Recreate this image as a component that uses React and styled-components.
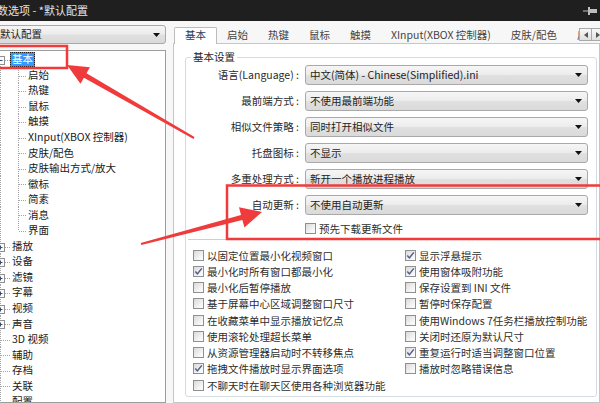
import React from "react";
import styled, { createGlobalStyle, css } from "styled-components";

const FONT = `"Noto Sans CJK SC", "Noto Sans", "Liberation Sans", sans-serif`;

const GlobalStyle = createGlobalStyle`
  html, body { margin: 0; padding: 0; background: #f7f7f7; }
  body { width: 600px; height: 403px; overflow: hidden; font-family: ${FONT}; }
  *, *::before, *::after { box-sizing: border-box; }
`;

const Window = styled.div`
  position: relative;
  width: 600px;
  height: 403px;
  overflow: hidden;
  background: #f7f7f7;
  display: flex;
  flex-direction: column;
  font-family: ${FONT};
  font-size: 10.5px;
  color: #222;
`;

const TitleBar = styled.div`
  flex: none;
  height: 21px;
  background: #1f1f1f;
  display: flex;
  align-items: center;
  justify-content: space-between;
  padding-right: 2px;
`;

const Title = styled.span`
  margin-left: -14px;
  color: #e4e4e4;
  font-size: 11px;
  line-height: 21px;
  white-space: nowrap;
`;

const Body = styled.div`
  flex: 1;
  min-height: 0;
  display: flex;
  gap: 7px;
  padding-top: 4px;
`;

const LeftCol = styled.div`
  flex: none;
  width: 176px;
  margin-left: -10px;
  display: flex;
  flex-direction: column;
  gap: 6px;
`;

const Combo = styled.div`
  flex: none;
  height: ${(p) => p.$h || 20}px;
  display: flex;
  align-items: center;
  justify-content: space-between;
  padding: 0 5px 0 ${(p) => p.$pl || 4}px;
  border: 1px solid #a9a9a9;
  border-radius: 3px;
  background: linear-gradient(#f6f6f6, #ececec 48%, #e0e0e0 52%, #dadada);
  color: #1e1e1e;
  white-space: nowrap;
  line-height: 1;
`;

const Tree = styled.div`
  flex: 1;
  min-height: 0;
  border: 1px solid #9d9d9d;
  background: #fff;
  padding-top: 1px;
  overflow: hidden;
`;

const TreeRow = styled.div`
  height: 15.55px;
  display: flex;
  align-items: center;
  white-space: nowrap;
`;

const NodeLabel = styled.span`
  padding: 0 2px;
  line-height: 14px;
  height: 15px;
  color: #1a1a1a;
  ${(p) =>
    p.$selected &&
    css`
      background: #3399ff;
      color: #fff;
      outline: 1px dotted #202020;
      outline-offset: -1px;
    `}
`;

const RightCol = styled.div`
  flex: none;
  width: 427px;
  position: relative;
  display: flex;
  flex-direction: column;
`;

const TabStrip = styled.div`
  flex: none;
  height: 18px;
  display: flex;
  align-items: flex-end;
  padding-left: 1px;
  white-space: nowrap;
`;

const Tab = styled.div`
  flex: none;
  padding: 0 10px 2px;
  height: 15px;
  line-height: 13px;
  color: #444;
  ${(p) =>
    p.$active &&
    css`
      position: relative;
      z-index: 1;
      height: 17px;
      margin-bottom: -1px;
      padding-bottom: 3px;
      border: 1px solid #bcbcbc;
      border-bottom: none;
      border-radius: 2px 2px 0 0;
      background: #fff;
      color: #1f3a5e;
    `}
`;

const ScrollButtons = styled.div`
  position: absolute;
  left: 407px;
  top: 3px;
  display: flex;
  z-index: 2;
`;

const ScrollBtn = styled.div`
  width: 13px;
  height: 13px;
  border: 1px solid #a9a9a9;
  margin-left: -1px;
  background: linear-gradient(#f8f8f8, #dfdfdf);
  display: flex;
  align-items: center;
  justify-content: center;
`;

const TabPage = styled.div`
  flex: 1;
  min-height: 0;
  border: 1px solid #c6c6c6;
  background: #fff;
  padding: 6px 0 0 11px;
`;

const GroupBox = styled.fieldset`
  margin: 0;
  width: 412px;
  min-width: 0;
  padding: 1px 8px 3px 8px;
  border: 1px solid #d3dce3;
  border-radius: 3px;
`;

const Legend = styled.legend`
  padding: 0 2px;
  margin-left: -3px;
  line-height: 14px;
  color: #1e1e1e;
`;

const FormGrid = styled.div`
  display: grid;
  grid-template-columns: 105px 283px;
  grid-template-rows: repeat(6, 20px) 14px;
  column-gap: 6px;
  row-gap: 6px;
`;

const FieldLabel = styled.div`
  text-align: right;
  line-height: 20px;
  white-space: nowrap;
  color: #2a2a2a;
`;

const Separator = styled.div`
  height: 1px;
  margin: 4px -6px 0;
  background: #cfcfcf;
`;

const CheckGrid = styled.div`
  display: grid;
  grid-template-columns: 212px 1fr;
  grid-auto-rows: 16.25px;
  margin: 7px 0 0 -1px;
`;

const CheckItem = styled.label`
  display: flex;
  align-items: center;
  gap: 3px;
  white-space: nowrap;
  color: #2e2e2e;
  grid-column: ${(p) => p.$col || "auto"};
`;

const Box = styled.span`
  flex: none;
  width: 11px;
  height: 11px;
  border: 1px solid #8e8f8f;
  background: linear-gradient(135deg, #d9d9d9, #f6f6f6 70%, #fdfdfd);
  display: flex;
  align-items: center;
  justify-content: center;
`;

const Overlay = styled.svg`
  position: absolute;
  left: 0;
  top: 0;
  width: 600px;
  height: 403px;
  pointer-events: none;
  z-index: 10;
`;

function DownArrow() {
  return (
    <svg width="7" height="4" viewBox="0 0 7 4">
      <path d="M0 0H7L3.5 4Z" fill="#111" />
    </svg>
  );
}

function Check({ checked }) {
  return (
    <Box>
      {checked && (
        <svg width="9" height="9" viewBox="0 0 9 9">
          <path d="M1.3 4.6 L3.4 6.9 L7.8 1.4" fill="none" stroke="#4d5f8c" strokeWidth="1.5" />
        </svg>
      )}
    </Box>
  );
}

const ROW_H = 15.55;

function Connector({ level, box, first, last }) {
  const cy = 8;
  const dot = { stroke: "#a3a3a3", strokeWidth: 1, strokeDasharray: "1 1", fill: "none" };
  if (level === 0) {
    return (
      <svg width="19" height={ROW_H} viewBox={`0 0 19 ${ROW_H}`} style={{ flex: "none" }}>
        <line x1="9.5" y1={first ? cy : 0} x2="9.5" y2={last ? cy : ROW_H} {...dot} />
        <line x1={box ? 14 : 10} y1={cy + 0.5} x2="19" y2={cy + 0.5} {...dot} />
        {box && (
          <g>
            <rect x="5.5" y={cy - 3.5} width="8" height="8" fill="#fafafa" stroke="#8f8f8f" />
            <line x1="7.5" y1={cy + 0.5} x2="11.5" y2={cy + 0.5} stroke="#3b4d6b" />
            {box === "plus" && <line x1="9.5" y1={cy - 1.5} x2="9.5" y2={cy + 2.5} stroke="#3b4d6b" />}
          </g>
        )}
      </svg>
    );
  }
  return (
    <svg width="35" height={ROW_H} viewBox={`0 0 35 ${ROW_H}`} style={{ flex: "none" }}>
      <line x1="9.5" y1="0" x2="9.5" y2={ROW_H} {...dot} />
      <line x1="27.5" y1="0" x2="27.5" y2={last ? cy : ROW_H} {...dot} />
      <line x1="28" y1={cy + 0.5} x2="35" y2={cy + 0.5} {...dot} />
    </svg>
  );
}

const tree = [
  { label: "基本", level: 0, box: "minus", first: true, selected: true },
  { label: "启始", level: 1 },
  { label: "热键", level: 1 },
  { label: "鼠标", level: 1 },
  { label: "触摸", level: 1 },
  { label: "XInput(XBOX 控制器)", level: 1 },
  { label: "皮肤/配色", level: 1 },
  { label: "皮肤输出方式/放大", level: 1 },
  { label: "徽标", level: 1 },
  { label: "简素", level: 1 },
  { label: "消息", level: 1 },
  { label: "界面", level: 1, last: true },
  { label: "播放", level: 0, box: "plus" },
  { label: "设备", level: 0, box: "plus" },
  { label: "滤镜", level: 0, box: "plus" },
  { label: "字幕", level: 0, box: "plus" },
  { label: "视频", level: 0, box: "plus" },
  { label: "声音", level: 0, box: "plus" },
  { label: "3D 视频", level: 0 },
  { label: "辅助", level: 0 },
  { label: "存档", level: 0 },
  { label: "关联", level: 0 },
  { label: "配置", level: 0 },
];

const tabs = ["基本", "启始", "热键", "鼠标", "触摸", "XInput(XBOX 控制器)", "皮肤/配色", "皮肤输出方式/放大"];

const fields = [
  ["语言(Language) :", "中文(简体) - Chinese(Simplified).ini"],
  ["最前端方式 :", "不使用最前端功能"],
  ["相似文件策略 :", "同时打开相似文件"],
  ["托盘图标 :", "不显示"],
  ["多重处理方式 :", "新开一个播放进程播放"],
  ["自动更新 :", "不使用自动更新"],
];

const checks = [
  ["以固定位置最小化视频窗口", false],
  ["显示浮悬提示", true],
  ["最小化时所有窗口都最小化", true],
  ["使用窗体吸附功能", true],
  ["最小化后暂停播放", false],
  ["保存设置到 INI 文件", false],
  ["基于屏幕中心区域调整窗口尺寸", false],
  ["暂停时保存配置", false],
  ["在收藏菜单中显示播放记忆点", false],
  ["使用Windows 7任务栏播放控制功能", false],
  ["使用滚轮处理超长菜单", false],
  ["关闭时还原为默认尺寸", false],
  ["从资源管理器启动时不转移焦点", false],
  ["重复运行时适当调整窗口位置", true],
  ["拖拽文件播放时显示界面选项", true],
  ["播放时忽略错误信息", false],
  ["不聊天时在聊天区使用各种浏览器功能", false],
];

function arrowPoints(x1, y1, x2, y2, headLen, headW, w0, w1) {
  const L = Math.hypot(x2 - x1, y2 - y1);
  const dx = (x2 - x1) / L;
  const dy = (y2 - y1) / L;
  const nx = -dy;
  const ny = dx;
  const bx = x2 - dx * headLen;
  const by = y2 - dy * headLen;
  const pts = [
    [x1 + nx * w0, y1 + ny * w0],
    [bx + nx * w1, by + ny * w1],
    [bx + nx * headW, by + ny * headW],
    [x2, y2],
    [bx - nx * headW, by - ny * headW],
    [bx - nx * w1, by - ny * w1],
    [x1 - nx * w0, y1 - ny * w0],
  ];
  return pts.map((p) => p.map((v) => v.toFixed(1)).join(",")).join(" ");
}

function PinIcon() {
  return (
    <svg width="15" height="10" viewBox="0 0 15 10">
      <rect x="0" y="4.5" width="5" height="1" fill="#bdbdbd" />
      <rect x="5" y="1" width="2" height="8" fill="#bdbdbd" />
      <rect x="7" y="3" width="7" height="4" fill="#bdbdbd" />
    </svg>
  );
}

function SmallTri({ dir }) {
  return (
    <svg width="4" height="6" viewBox="0 0 4 6">
      <path d={dir === "left" ? "M4 0V6L0 3Z" : "M0 0V6L4 3Z"} fill="#555" />
    </svg>
  );
}

export default function App() {
  const RED = "#ef3b3b";
  return (
    <Window>
      <GlobalStyle />
      <TitleBar>
        <Title>参数选项 - *默认配置</Title>
        <PinIcon />
      </TitleBar>
      <Body>
        <LeftCol>
          <Combo $h={19} $pl={9}>
            <span>默认配置</span>
            <DownArrow />
          </Combo>
          <Tree>
            {tree.map((n, i) => (
              <TreeRow key={i}>
                <Connector level={n.level} box={n.box} first={n.first} last={n.last} />
                <NodeLabel $selected={n.selected}>{n.label}</NodeLabel>
              </TreeRow>
            ))}
          </Tree>
        </LeftCol>
        <RightCol>
          <TabStrip>
            {tabs.map((t, i) => (
              <Tab key={t} $active={i === 0}>
                {t}
              </Tab>
            ))}
          </TabStrip>
          <ScrollButtons>
            <ScrollBtn>
              <SmallTri dir="left" />
            </ScrollBtn>
            <ScrollBtn>
              <SmallTri dir="right" />
            </ScrollBtn>
          </ScrollButtons>
          <TabPage>
            <GroupBox>
              <Legend>基本设置</Legend>
              <FormGrid>
                {fields.map(([l, v]) => (
                  <React.Fragment key={l}>
                    <FieldLabel>{l}</FieldLabel>
                    <Combo>
                      <span>{v}</span>
                      <DownArrow />
                    </Combo>
                  </React.Fragment>
                ))}
                <CheckItem $col="2">
                  <Check checked={false} />
                  预先下载更新文件
                </CheckItem>
              </FormGrid>
              <Separator />
              <CheckGrid>
                {checks.map(([t, c]) => (
                  <CheckItem key={t}>
                    <Check checked={c} />
                    {t}
                  </CheckItem>
                ))}
              </CheckGrid>
            </GroupBox>
          </TabPage>
        </RightCol>
      </Body>
      <Overlay viewBox="0 0 600 403">
        <rect x="-3" y="46" width="70" height="22" fill="none" stroke={RED} strokeWidth="2.5" />
        <rect x="227" y="185.5" width="380" height="53.5" fill="none" stroke={RED} strokeWidth="2.5" />
        <polygon points={arrowPoints(194, 138, 67, 65, 21, 9.5, 1, 2.6)} fill={RED} />
        <polygon points={arrowPoints(141, 244, 262, 212, 21, 10.5, 1, 2.6)} fill={RED} />
      </Overlay>
    </Window>
  );
}
